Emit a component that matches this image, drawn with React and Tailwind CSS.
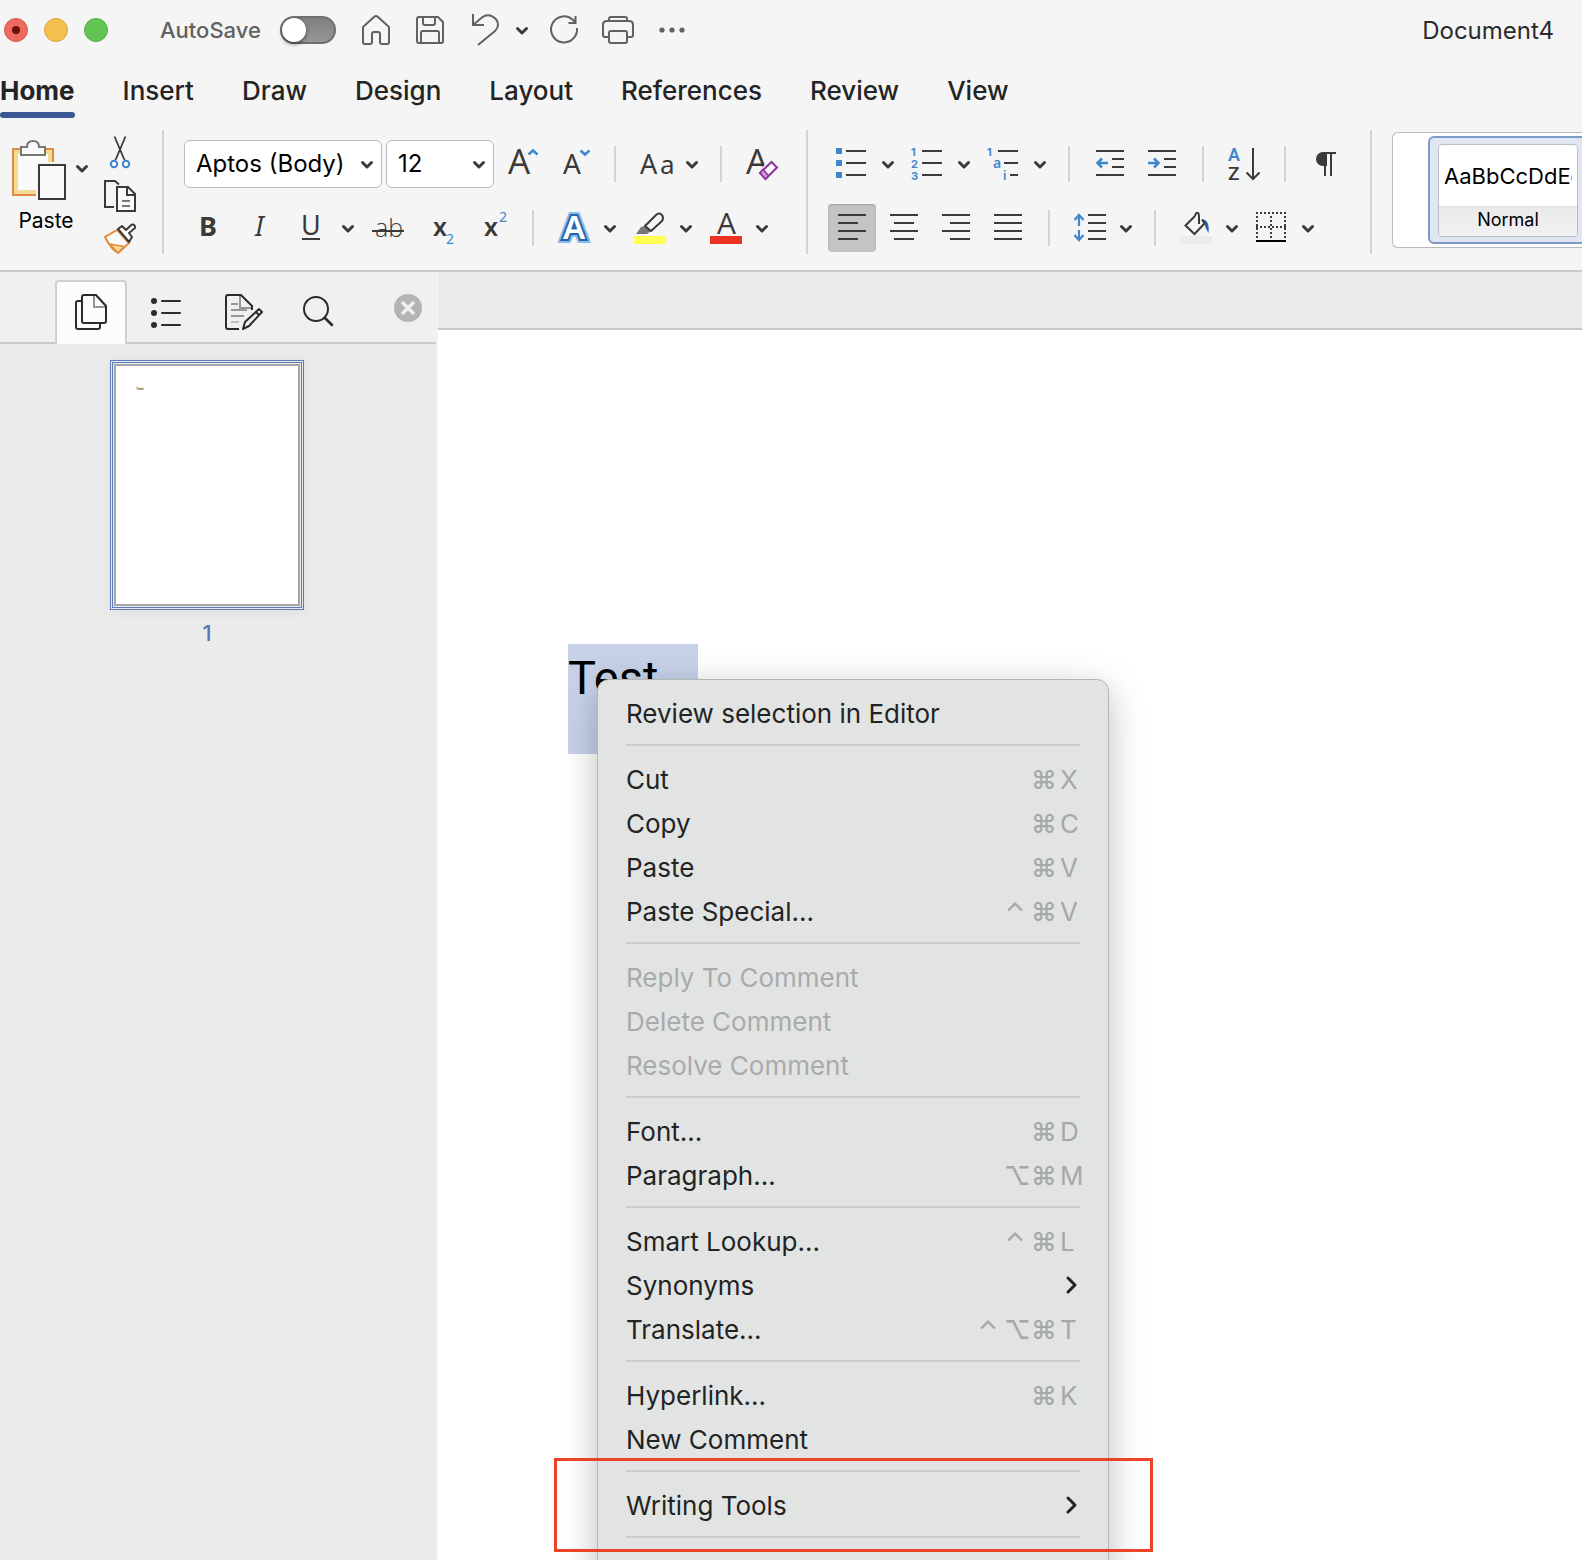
import React, { useState } from "react";

const INK = "#3b3a39";
const BLUE = "#3f87ca";

const ribbonTabs = ["Home", "Insert", "Draw", "Design", "Layout", "References", "Review", "View"];

const menuGroups = [
  [{ label: "Review selection in Editor" }],
  [
    { label: "Cut", keys: ["⌘", "X"] },
    { label: "Copy", keys: ["⌘", "C"] },
    { label: "Paste", keys: ["⌘", "V"] },
    { label: "Paste Special...", keys: ["⌃", "⌘", "V"] },
  ],
  [
    { label: "Reply To Comment", disabled: true },
    { label: "Delete Comment", disabled: true },
    { label: "Resolve Comment", disabled: true },
  ],
  [
    { label: "Font...", keys: ["⌘", "D"] },
    { label: "Paragraph...", keys: ["⌥", "⌘", "M"] },
  ],
  [
    { label: "Smart Lookup...", keys: ["⌃", "⌘", "L"] },
    { label: "Synonyms", submenu: true },
    { label: "Translate...", keys: ["⌃", "⌥", "⌘", "T"] },
  ],
  [{ label: "Hyperlink...", keys: ["⌘", "K"] }, { label: "New Comment" }],
];

/* ---------- icon helpers ---------- */

const Icon = ({ children, w = 32, h = 32, color = INK, className = "" }) => (
  <svg
    width={w}
    height={h}
    viewBox={`0 0 ${w} ${h}`}
    fill="none"
    stroke={color}
    strokeWidth="2"
    className={`block shrink-0 overflow-visible ${className}`}
    aria-hidden="true"
  >
    {children}
  </svg>
);

const Glyph = ({ x, y, size, fill = INK, weight = 400, family = "Noto Sans", italic, children }) => (
  <text
    x={x}
    y={y}
    fontSize={size}
    fontWeight={weight}
    fontStyle={italic ? "italic" : "normal"}
    fontFamily={`"${family}", sans-serif`}
    fill={fill}
    stroke="none"
  >
    {children}
  </text>
);

const Chevron = () => (
  <Icon w={12} h={10}>
    <path d="M1.5 2.5 L6 7 L10.5 2.5" strokeWidth="3" strokeLinecap="round" strokeLinejoin="round" />
  </Icon>
);

const Tool = ({ label, children, active }) => (
  <button
    aria-label={label}
    className={
      active
        ? "-my-2 -ml-2 -mr-[6px] flex h-12 w-12 items-center justify-center rounded bg-[#c4c4c4] shadow-[inset_0_1px_2px_rgba(0,0,0,0.2)]"
        : "mr-[2px] h-8 w-8"
    }
  >
    {children}
  </button>
);

const Split = ({ label, children }) => (
  <div className="flex items-center gap-3">
    <Tool label={label}>{children}</Tool>
    <button aria-label={`${label} options`} className="mt-[2px]">
      <Chevron />
    </button>
  </div>
);

const Divider = () => <div className="ml-1 mr-[6px] h-9 w-[2px] bg-[#d2d2d2]" />;
const GroupDivider = () => <div className="mt-[10px] h-[124px] w-[2px] shrink-0 bg-[#d2d2d2]" />;

const Combo = ({ label, value, className }) => (
  <div className={`relative ${className}`}>
    <select
      aria-label={label}
      defaultValue={value}
      className="h-12 w-full appearance-none rounded-md border border-[#b9b9b9] bg-white pl-[11px] text-2xl text-black"
    >
      <option>{value}</option>
    </select>
    <div className="pointer-events-none absolute right-[9px] top-5">
      <Chevron />
    </div>
  </div>
);

/* ---------- title bar ---------- */

const TitleBar = () => {
  const [autoSave, setAutoSave] = useState(false);
  return (
    <header className="flex h-[60px] items-center pl-1 pr-7">
      <div className="flex gap-4">
        <button aria-label="Close" className="flex h-6 w-6 items-center justify-center rounded-full border border-[#d9584c] bg-[#ec6a5e]">
          <span className="h-2 w-2 rounded-full bg-[#6b0f0a]" />
        </button>
        <button aria-label="Minimize" className="h-6 w-6 rounded-full border border-[#d9a53f] bg-[#f5bf4f]" />
        <button aria-label="Zoom" className="h-6 w-6 rounded-full border border-[#53b044] bg-[#61c554]" />
      </div>
      <label htmlFor="autosave" className="ml-[52px] w-[120px] text-[22px] font-medium text-[#616161]">
        AutoSave
      </label>
      <input
        id="autosave"
        type="checkbox"
        checked={autoSave}
        onChange={(e) => setAutoSave(e.target.checked)}
        className="flex h-7 w-14 appearance-none rounded-full border-2 border-[#6f6f6f] bg-linear-to-b from-[#7f7f7f] to-[#979797] before:h-6 before:w-6 before:rounded-full before:bg-white before:shadow-[0_2px_4px_rgba(0,0,0,0.5)] checked:justify-end checked:bg-[#3a5795]"
      />
      <div className="ml-6 flex items-center gap-[22px]">
        <button aria-label="Home">
          <Icon color="#616161">
            <path d="M3 13 L14.5 2.6 Q16 1.4 17.5 2.6 L29 13 V28 Q29 30 27 30 H22 Q20 30 20 28 V20 Q20 18 18 18 H14 Q12 18 12 20 V28 Q12 30 10 30 H5 Q3 30 3 28 Z" strokeLinejoin="round" />
          </Icon>
        </button>
        <button aria-label="Save">
          <Icon color="#616161">
            <path d="M5 3 H24 L29 8 V27 Q29 29 27 29 H5 Q3 29 3 27 V5 Q3 3 5 3 Z" strokeLinejoin="round" />
            <path d="M9 3 V9 Q9 11 11 11 H19 Q21 11 21 9 V3 M7 29 V19 Q7 17 9 17 H23 Q25 17 25 19 V29" />
          </Icon>
        </button>
        <div className="-mr-[2px] flex items-center gap-4">
          <button aria-label="Undo">
            <Icon color="#616161">
              <path d="M5 0 V11 H16 M5.5 10.5 L14 3.5 C21 -2 30 4 30 11 Q30 14 27 17 L10 31" />
            </Icon>
          </button>
          <button aria-label="Undo options" className="mt-[2px]">
            <Chevron />
          </button>
        </div>
        <button aria-label="Repeat">
          <Icon color="#616161">
            <path d="M29 14 A13 13 0 1 1 24.5 5.5 L27.5 8.5 M27.5 2 V9 H20.5" />
          </Icon>
        </button>
        <button aria-label="Print">
          <Icon color="#616161">
            <path d="M6 23 H3 Q1 23 1 21 V11 Q1 7 5 7 H27 Q31 7 31 11 V21 Q31 23 29 23 H26 M7 7 V5 Q7 3 9 3 H23 Q25 3 25 5 V7" />
            <rect x="7" y="17" width="18" height="12" rx="2" />
          </Icon>
        </button>
        <button aria-label="More">
          <Icon color="none">
            <g fill="#616161">
              <circle cx="6" cy="16" r="2.6" />
              <circle cx="16" cy="16" r="2.6" />
              <circle cx="26" cy="16" r="2.6" />
            </g>
          </Icon>
        </button>
      </div>
      <h1 className="ml-auto pt-[2px] text-2xl text-[#2b2b2b]">Document4</h1>
    </header>
  );
};

const TabBar = () => (
  <nav className="flex h-[60px] gap-12 text-[26px] font-medium text-[#242424]">
    {ribbonTabs.map((tab) => (
      <button
        key={tab}
        className={`flex h-[58px] flex-col items-start ${tab === "Home" ? "font-bold" : ""}`}
      >
        <span className="flex h-[52px] items-center pt-2">{tab}</span>
        {tab === "Home" && <span className="h-[6px] w-full rounded-full bg-[#3a5795]" />}
      </button>
    ))}
  </nav>
);

/* ---------- ribbon ---------- */

const ClipboardGroup = () => (
  <div className="flex items-start pl-3">
    <button className="pt-5">
      <Icon w={54} h={60}>
        <rect x="1" y="9" width="40" height="46" fill="#f4dc98" stroke="#e08c3f" />
        <rect x="6" y="14" width="30" height="36" fill="#fafafa" stroke="none" />
        <path d="M9 7 H15 Q15 1 21 1 Q27 1 27 7 H33 V15 H9 Z" fill="#fafafa" stroke="#797774" />
        <rect x="24" y="22" width="30" height="38" fill="#f5f5f5" stroke="none" />
        <rect x="27" y="25" width="26" height="34" fill="#fafafa" />
      </Icon>
      <span className="block w-[68px] text-center text-[21px] leading-[42px] text-black">Paste</span>
    </button>
    <button aria-label="Paste options" className="-ml-1 mt-11">
      <Chevron />
    </button>
    <div className="ml-4 mt-4 flex flex-col gap-3">
      <button aria-label="Cut">
        <Icon>
          <path d="M10.5 0.5 L20.5 24 M21.5 0.5 L11.5 24" strokeWidth="1.8" />
          <circle cx="10" cy="28" r="3.2" stroke={BLUE} />
          <circle cx="22" cy="28" r="3.2" stroke={BLUE} />
        </Icon>
      </button>
      <button aria-label="Copy">
        <Icon>
          <path d="M10 27 H1 V1 H11 L15 4.5" />
          <path d="M13 7 H24 L31 14 V31 H13 Z" fill="#fafafa" />
          <path d="M23 7 V15 H31" />
          <path d="M18 21 H26 M18 26 H26" stroke="#797774" />
        </Icon>
      </button>
      <button aria-label="Format painter">
        <Icon>
          <path d="M13 6 L1 13 Q7 25 14 29 L25 19 Z" fill="#fafafa" stroke="#e08c3f" />
          <path d="M6 20 L20 22.5 L14 29 Z" fill="#f4dc98" stroke="#e08c3f" strokeWidth="1.5" />
          <path d="M14 5 L18 2 L22 6 L27.5 0.7 Q31.5 0 31 4 L25 9 L28 13 L25 18 Z" fill="#fafafa" strokeLinejoin="round" />
        </Icon>
      </button>
    </div>
  </div>
);

const FontGroup = () => (
  <div className="flex flex-col gap-4 pl-5 pr-[26px] pt-5">
    <div className="flex h-12 items-center">
      <Combo label="Font" value="Aptos (Body)" className="w-[198px]" />
      <Combo label="Font size" value="12" className="ml-1 w-[108px]" />
      <div className="ml-3 flex items-center gap-[18px]">
        <Tool label="Increase font size">
          <Icon>
            <Glyph x={2} y={26} size={35} family="Open Sans">A</Glyph>
            <path d="M22.5 6.5 L27 2.5 L31.5 6.5" stroke={BLUE} strokeWidth="2.5" />
          </Icon>
        </Tool>
        <Tool label="Decrease font size">
          <Icon>
            <Glyph x={5} y={26} size={28}>A</Glyph>
            <path d="M22.5 2.5 L27 6.5 L31.5 2.5" stroke={BLUE} strokeWidth="2.5" />
          </Icon>
        </Tool>
        <Divider />
        <Split label="Change case">
          <Icon>
            <Glyph x={0} y={26} size={27}>A</Glyph>
            <Glyph x={20} y={26} size={26}>a</Glyph>
          </Icon>
        </Split>
        <Divider />
        <Tool label="Clear formatting">
          <Icon>
            <Glyph x={0} y={26} size={35} family="Open Sans">A</Glyph>
            <path d="M25 10 L34 19 L20 34 L11 25 Z" fill="#f5f5f5" stroke="none" />
            <path d="M25.5 14 L31 19.5 L19.5 31 L14 25 Z" fill="#fafafa" stroke="#8a2f9c" />
            <path d="M17 21.5 L22.5 27.5 L19.5 31 L14 25 Z" fill="#cf9bd6" stroke="#8a2f9c" strokeWidth="1.5" />
          </Icon>
        </Tool>
      </div>
    </div>
    <div className="flex h-12 items-center gap-[18px] pl-2">
      <Tool label="Bold">
        <Icon>
          <Glyph x={7} y={24} size={27} weight={700}>B</Glyph>
        </Icon>
      </Tool>
      <Tool label="Italic">
        <Icon>
          <Glyph x={11} y={24} size={27} italic>I</Glyph>
        </Icon>
      </Tool>
      <Split label="Underline">
        <Icon>
          <Glyph x={5} y={23} size={27}>U</Glyph>
          <path d="M6 27 H24" />
        </Icon>
      </Split>
      <Tool label="Strikethrough">
        <Icon>
          <Glyph x={3} y={25} size={25} weight={300} family="Open Sans">ab</Glyph>
          <path d="M0 19 H32" />
        </Icon>
      </Tool>
      <Tool label="Subscript">
        <Icon>
          <Glyph x={9} y={24} size={25} weight={600}>x</Glyph>
          <Glyph x={22} y={32} size={14} fill={BLUE}>2</Glyph>
        </Icon>
      </Tool>
      <Tool label="Superscript">
        <Icon>
          <Glyph x={8} y={24} size={25} weight={600}>x</Glyph>
          <Glyph x={23} y={10} size={14} fill={BLUE}>2</Glyph>
        </Icon>
      </Tool>
      <Divider />
      <Split label="Text effects">
        <Icon>
          <g fontFamily='"Noto Sans", sans-serif' fontWeight="600" fontSize="33" textAnchor="middle">
            <text x="16" y="27" stroke="#8cbbe8" strokeWidth="8" fill="none">A</text>
            <text x="16" y="27" stroke="#2463ae" strokeWidth="4" fill="none">A</text>
            <text x="16" y="27" stroke="none" fill="#ffffff">A</text>
          </g>
        </Icon>
      </Split>
      <Split label="Highlight color">
        <Icon>
          <path d="M2 22 L7 15 L11 14 L17 19 L13 22 Z" fill="#797774" stroke="none" />
          <path d="M11 14 L22 3 Q25 0 28 3 Q30 6 28 9 L17 19 Z" strokeLinejoin="round" />
          <rect y="24" width="32" height="8" fill="#ffff54" stroke="none" />
        </Icon>
      </Split>
      <Split label="Font color">
        <Icon>
          <Glyph x={7} y={22} size={30} family="Open Sans">A</Glyph>
          <rect y="24" width="32" height="8" fill="#eb3323" stroke="none" />
        </Icon>
      </Split>
    </div>
  </div>
);

const ParagraphGroup = () => (
  <div className="flex flex-col gap-4 pl-7 pr-[26px] pt-5">
    <div className="flex h-12 items-center gap-[18px]">
      <Split label="Bullets">
        <Icon>
          <path d="M0 3 H6 M0 15 H6 M0 27 H6" stroke={BLUE} strokeWidth="6" />
          <path d="M10 3 H30 M10 15 H30 M10 27 H30" />
        </Icon>
      </Split>
      <Split label="Numbering">
        <Icon>
          <Glyph x={-1} y={8} size={11} weight={700} fill={BLUE} family="Inter">1</Glyph>
          <Glyph x={-1} y={20} size={11} weight={700} fill={BLUE} family="Inter">2</Glyph>
          <Glyph x={-1} y={32} size={11} weight={700} fill={BLUE} family="Inter">3</Glyph>
          <path d="M10 3 H30 M10 15 H30 M10 27 H30" />
        </Icon>
      </Split>
      <Split label="Multilevel list">
        <Icon>
          <Glyph x={-1} y={8} size={11} weight={700} fill={BLUE} family="Inter">1</Glyph>
          <Glyph x={5} y={20} size={14} weight={600} fill={BLUE}>a</Glyph>
          <Glyph x={15} y={32} size={12} weight={600} fill={BLUE}>i</Glyph>
          <path d="M10 3 H30 M16 15 H30 M22 27 H30" />
        </Icon>
      </Split>
      <Divider />
      <Tool label="Decrease indent">
        <Icon>
          <path d="M2 3 H30 M18 11 H30 M18 19 H30 M2 27 H30" />
          <path d="M3.5 15 H14 M8 10.5 L3.5 15 L8 19.5" stroke={BLUE} strokeWidth="2.5" />
        </Icon>
      </Tool>
      <Tool label="Increase indent">
        <Icon>
          <path d="M2 3 H30 M18 11 H30 M18 19 H30 M2 27 H30" />
          <path d="M2 15 H12.5 M8 10.5 L12.5 15 L8 19.5" stroke={BLUE} strokeWidth="2.5" />
        </Icon>
      </Tool>
      <Divider />
      <Tool label="Sort">
        <Icon>
          <Glyph x={0} y={13} size={18} weight={600} fill={BLUE} family="Roboto">A</Glyph>
          <Glyph x={0} y={32} size={19} weight={500} family="Roboto">Z</Glyph>
          <path d="M25 0 V31 M18.5 24.5 L25 31 L31.5 24.5" />
        </Icon>
      </Tool>
      <Divider />
      <Tool label="Show formatting marks">
        <Icon>
          <path d="M15 18 H13 A7 7 0 0 1 13 4 H17 V18 Z" fill={INK} stroke="none" />
          <path d="M13 5 H26 M15 4 V28 M21 4 V28" />
        </Icon>
      </Tool>
    </div>
    <div className="flex h-12 items-center gap-[18px]">
      <Tool label="Align left" active>
        <Icon>
          <path d="M2 3 H30 M2 11 H22 M2 19 H30 M2 27 H22" />
        </Icon>
      </Tool>
      <Tool label="Center">
        <Icon>
          <path d="M2 3 H30 M6 11 H26 M2 19 H30 M6 27 H26" />
        </Icon>
      </Tool>
      <Tool label="Align right">
        <Icon>
          <path d="M2 3 H30 M10 11 H30 M2 19 H30 M10 27 H30" />
        </Icon>
      </Tool>
      <Tool label="Justify">
        <Icon>
          <path d="M2 3 H30 M2 11 H30 M2 19 H30 M2 27 H30" />
        </Icon>
      </Tool>
      <Divider />
      <Split label="Line spacing">
        <Icon>
          <path d="M14 3 H32 M14 11 H32 M14 19 H32 M14 27 H32" />
          <path d="M5 14 V3 M0.5 8 L5 3 L9.5 8 M5 18 V28 M0.5 23 L5 28 L9.5 23" stroke={BLUE} strokeWidth="2.2" />
        </Icon>
      </Split>
      <Divider />
      <Split label="Shading">
        <Icon>
          <path d="M22 7 Q30 8 28.5 21 Q25 16 24.5 12 Z" fill="#2463ae" stroke="none" />
          <path d="M15 4 L5.5 13.5 L14.5 22 L24.5 11.5 L22 7.5 M15 4 Q16 0 18 1 Q19 2 19 4 V12" />
          <rect y="24" width="32" height="8" fill="#ececec" stroke="none" />
        </Icon>
      </Split>
      <Split label="Borders">
        <Icon>
          <path d="M0 1 H30 M0 15 H30" strokeDasharray="2 2" />
          <path d="M1 4 V28 M15 4 V28 M29 4 V28" strokeDasharray="2 2" />
          <path d="M0 29 H30" stroke="#000000" />
        </Icon>
      </Split>
    </div>
  </div>
);

const StyleGallery = () => (
  <div className="ml-5 mt-3 h-[116px] min-w-0 flex-1 overflow-hidden rounded-l-md border border-r-0 border-[#b9b9b9] bg-white pl-[35px] pt-[3px]">
    <div className="h-[108px] w-[180px] rounded-md border-2 border-[#7d9bc8] bg-[#e1e7f2] pl-2 pt-[6px]">
      <button className="flex h-[93px] w-[140px] flex-col overflow-hidden rounded border border-[#b9bfca] bg-white">
        <span className="mx-[5px] h-[61px] w-[128px] overflow-hidden text-left text-[22px] leading-[62px] text-black">
          AaBbCcDdEe
        </span>
        <span className="w-full flex-1 border-t border-[#e0e0e0] bg-linear-to-b from-[#e9e9e9] to-[#f2f2f2] text-lg leading-[26px] text-black">
          Normal
        </span>
      </button>
    </div>
  </div>
);

/* ---------- sidebar ---------- */

const Sidebar = () => (
  <aside className="flex w-[438px] shrink-0 flex-col border-r-2 border-[#f3f3f3] bg-[#ebebeb]">
    <div className="flex h-[72px] items-end border-b-2 border-[#cbcbcb] bg-[#f0f0f0] pl-[55px]">
      <button
        aria-label="Thumbnails"
        className="-mb-[2px] flex h-16 w-[72px] justify-center rounded-t border-2 border-b-0 border-[#d0d0d0] bg-[#fcfcfc] pt-3"
      >
        <Icon w={32} h={36} color="#2b2b2b">
          <path d="M7 7 H3 Q1 7 1 9 V33 Q1 35 3 35 H23 Q25 35 25 33 V29" />
          <path d="M9 1 H21 L31 12 V27 Q31 29 29 29 H9 Q7 29 7 27 V3 Q7 1 9 1 Z" />
          <path d="M19 2 V13 H30" stroke="#979797" />
        </Icon>
      </button>
      <button aria-label="Navigation" className="ml-6 h-[58px]">
        <Icon w={30} h={32} color="#2b2b2b">
          <path d="M11 4 H29 M11 16 H29 M11 28 H29" strokeLinecap="round" />
          <g fill="#2b2b2b" stroke="none">
            <circle cx="3" cy="4" r="3" />
            <circle cx="3" cy="16" r="3" />
            <circle cx="3" cy="28" r="3" />
          </g>
        </Icon>
      </button>
      <button aria-label="Reviewing" className="ml-11 h-[60px]">
        <Icon w={38} h={36} color="#2b2b2b">
          <path d="M6 10 H13 M6 16 H22 M6 22 H19" stroke="#979797" />
          <path d="M6 28 H14" stroke="#c0c0c0" />
          <path d="M15 2 V14 H27" stroke="#979797" />
          <path d="M14 35 H3 Q1 35 1 33 V3 Q1 1 3 1 H16 L27 12 V16" />
          <path d="M18 35 L20 28 L34 15 L37 18 L24 32 Z M31 18 L34 21" strokeLinejoin="round" />
        </Icon>
      </button>
      <button aria-label="Find" className="ml-10 h-[62px]">
        <Icon w={30} h={32} color="#2b2b2b">
          <circle cx="13" cy="14" r="12" />
          <path d="M22 23 L29 30" strokeWidth="2.5" strokeLinecap="round" />
        </Icon>
      </button>
      <button aria-label="Close sidebar" className="ml-auto mr-[14px] h-[68px]">
        <Icon w={28} h={28} color="#f0f0f0">
          <circle cx="14" cy="14" r="14" fill="#b4b4b4" stroke="none" />
          <path d="M9 9 L19 19 M19 9 L9 19" strokeWidth="3.5" strokeLinecap="round" />
        </Icon>
      </button>
    </div>
    <div className="flex flex-col items-center pr-[22px] pt-4">
      <button aria-label="Page 1">
        <div className="border border-[#5b7bb4] p-px shadow-[0_2px_12px_rgba(0,0,0,0.06)]">
          <div className="border border-[#5b7bb4] p-px">
            <div className="h-[242px] w-[186px] border-2 border-[#a3a7ab] bg-white pl-5 pt-5 text-left font-['Roboto',sans-serif] text-[4px] leading-[5px] text-black">
              Test
            </div>
          </div>
        </div>
      </button>
      <span className="mt-[7px] text-[22px] font-medium text-[#5a76b0]">1</span>
    </div>
  </aside>
);

/* ---------- context menu ---------- */

const MenuItem = ({ label, keys, submenu, disabled }) => (
  <button
    role="menuitem"
    disabled={disabled}
    className="flex h-11 w-full items-center whitespace-nowrap text-left text-[#222423] disabled:text-[#a9abaa]"
  >
    <span className="flex-1">{label}</span>
    {keys && (
      <span className="flex gap-[5px] text-[#a6a8a7]">
        {keys.map((k, i) => (
          <span key={k} className={i === keys.length - 1 ? "ml-[2px] w-5" : "w-[22px] text-center font-medium"}>
            {k}
          </span>
        ))}
      </span>
    )}
    {submenu && (
      <Icon w={15} h={20} color="#222423">
        <path d="M3 3 L10 10 L3 17" strokeWidth="3" strokeLinecap="round" strokeLinejoin="round" />
      </Icon>
    )}
  </button>
);

const Separator = () => (
  <div role="separator" className="h-[22px] pt-[9px]">
    <div className="h-[2px] bg-[#cacccb]" />
  </div>
);

const ContextMenu = () => (
  <div
    role="menu"
    className="absolute left-[159px] top-[349px] w-[512px] rounded-xl border border-[#b4b6b5] bg-[#e2e4e3] px-[28px] pb-20 pt-[11px] text-[26px] shadow-[0_10px_36px_rgba(0,0,0,0.25)]"
  >
    {menuGroups.map((group, i) => (
      <React.Fragment key={group[0].label}>
        {i > 0 && <Separator />}
        {group.map((item) => (
          <MenuItem key={item.label} {...item} />
        ))}
      </React.Fragment>
    ))}
    <div className="relative">
      <Separator />
      <MenuItem label="Writing Tools" submenu />
      <Separator />
      <div className="pointer-events-none absolute -bottom-[3px] -left-[72px] -right-[73px] -top-[3px] border-3 border-[#ea4326]" />
    </div>
  </div>
);

const App = () => (
  <div className="flex h-screen flex-col overflow-hidden bg-[#f5f5f5] font-['Inter',sans-serif]">
    <TitleBar />
    <TabBar />
    <section className="flex h-[152px] shrink-0 border-b-2 border-[#cbcbcb]">
      <ClipboardGroup />
      <div className="w-[26px]" />
      <GroupDivider />
      <FontGroup />
      <GroupDivider />
      <ParagraphGroup />
      <GroupDivider />
      <StyleGallery />
    </section>
    <div className="flex min-h-0 flex-1">
      <Sidebar />
      <main className="flex min-w-0 flex-1 flex-col">
        <div className="h-[58px] shrink-0 border-b-2 border-[#c6c6c6] bg-[#ebebeb]" />
        <div className="relative flex-1 bg-white pl-[130px] pt-[314px]">
          <p className="h-[110px] w-[130px] bg-[#c7d2e9] font-['Roboto',sans-serif] text-[47px] leading-[68px] text-black">
            Test
          </p>
          <ContextMenu />
        </div>
      </main>
    </div>
  </div>
);

export default App;
